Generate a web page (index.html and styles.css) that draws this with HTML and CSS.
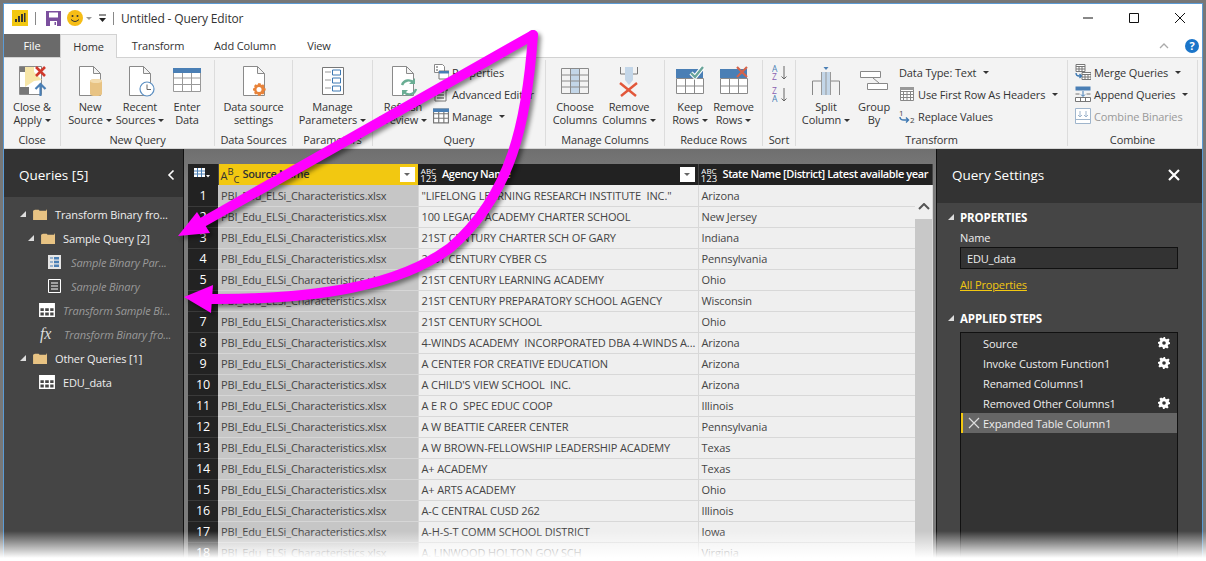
FILE: index.html
```html
<!DOCTYPE html>
<html lang="en">
<head>
    <meta charset="UTF-8" />
    <title>Untitled - Query Editor</title>
    <link rel="stylesheet" href="styles.css">
</head>
<body>
<svg class="sprite" width="0" height="0">
    <symbol id="page" viewBox="0 0 32 34"><path d="M5.500 2.500h14l7 7v22h-21z M19.500 2.500v7h7" fill="#fff" stroke="#8a8a8a"/></symbol>
    <symbol id="folder" viewBox="0 0 16 14"><path d="M0 3l2-1h4l1 1h7l1-2v12H0z" fill="#e8c383"/></symbol>
    <symbol id="grid-w" viewBox="0 0 16 14"><path d="M.75.75h14.500v12.500H.75z M.75 4.500h14.500 M.75 8.750h14.500 M5.500 4.500v8.750 M10.500 4.500v8.750" fill="none" stroke="#fff" stroke-width="1.400"/><path d="M1 1h14v3H1z" fill="#fff"/></symbol>
    <symbol id="gear" viewBox="0 0 12 12"><path d="M5 0h2l.4 1.700 1.400.6L10.300 1.400l1.300 1.300-.9 1.500.6 1.400L12 5v2l-1.700.4-.6 1.400.9 1.500-1.300 1.300-1.500-.9-1.400.6L7 12H5l-.4-1.700-1.400-.6-1.500.9L.4 9.300l.9-1.500-.6-1.400L0 7V5l1.700-.4.6-1.400-.9-1.500L3 .4l1.500.9 1.400-.6z" fill="#fff"/><circle cx="6" cy="6" r="1.800" fill="#333"/></symbol>
    <symbol id="mini-grid" viewBox="0 0 14 14"><path d="M.5 1h13v12H.5z M.5 5h13 M.5 9h13 M5 2v11 M9.500 2v11" fill="#fff" stroke="#777"/><path d="M0 .5h14v3H0z" fill="#4a7fb5"/></symbol>
</svg>

<div class="window">
    <div class="titlebar">
        <svg class="pbi" width="16" height="16" viewBox="0 0 16 16"><rect width="16" height="16" fill="#f2c811"/><path d="M3 12V9h2v3z M6 12V6h2v6z M9 12V4h2v8z M12 12V3h1.500v9z" fill="#333"/></svg>
        <span class="tsep"></span>
        <svg class="save" width="15" height="15" viewBox="0 0 15 15"><path d="M0 0h15v15H0z" fill="#7b4f9e"/><path d="M3 1.500h9v5H3z" fill="#fff"/><path d="M4 10h7v5H4z" fill="#fff"/><path d="M8.500 11h1.500v3H8.500z" fill="#7b4f9e"/></svg>
        <svg class="smile" width="16" height="16" viewBox="0 0 16 16"><circle cx="8" cy="8" r="8" fill="#f6bd16"/><circle cx="5.500" cy="6" r="1" fill="#333"/><circle cx="10.500" cy="6" r="1" fill="#333"/><path d="M4 9.500q4 4 8 0" fill="none" stroke="#333"/></svg>
        <span class="caret grey"></span>
        <svg class="qat" width="9" height="9" viewBox="0 0 9 9"><path d="M1 1h7" stroke="#222"/><path d="M1 4h7L4.500 8z" fill="#222"/></svg>
        <span class="tsep last"></span>
        <span class="title">Untitled - Query Editor</span>
        <div class="winctl">
            <svg width="12" height="12" viewBox="0 0 12 12"><path d="M1 6h10" stroke="#111"/></svg>
            <svg width="12" height="12" viewBox="0 0 12 12"><path d="M1.500 1.500h9v9h-9z" fill="none" stroke="#111"/></svg>
            <svg width="12" height="12" viewBox="0 0 12 12"><path d="M1 1l10 10M11 1L1 11" stroke="#111"/></svg>
        </div>
    </div>

    <div class="tabs">
        <span class="tab file">File</span>
        <span class="tab active">Home</span>
        <span class="tab t-transform">Transform</span>
        <span class="tab t-add">Add Column</span>
        <span class="tab t-view">View</span>
        <svg class="collapse" width="10" height="6" viewBox="0 0 10 6"><path d="M1 5l4-4 4 4" fill="none" stroke="#aaa" stroke-width="1.300"/></svg>
        <span class="help">?</span>
    </div>

    <div class="ribbon">
        <div class="group g-close">
            <div class="items">
                <div class="big">
                    <svg class="ico" width="32" height="34" viewBox="0 0 32 34"><path d="M3.500 2.500h22v28h-22z" fill="#fff" stroke="#8a8a8a"/><path d="M4 3h5v5H4z M4 23h9v7H4z" fill="#777"/><path d="M9 3h9v14l-9 6z" fill="#f7e6a8"/><path d="M18 8l8 8-8 1z" fill="#f7e6a8"/><path d="M20 3l9 9M29 3l-9 9" stroke="#d0392b" stroke-width="2.600"/><path d="M24.500 32V21M19.500 25l5-5 5 5" fill="none" stroke="#4a7fb5" stroke-width="2.200"/></svg>
                    <span>Close &amp;</span><span>Apply<i class="caret"></i></span>
                </div>
            </div>
            <div class="label">Close</div>
        </div>

        <div class="group g-new">
            <div class="items">
                <div class="big w-new">
                    <svg class="ico" width="32" height="34"><use href="#page"/><path d="M15 16a6 2 0 0 1 12 0v13a6 2 0 0 1-12 0z" fill="#e8c383" transform="translate(1 1)"/><ellipse cx="22" cy="17" rx="6" ry="2" fill="#f3dcae"/></svg>
                    <span>New</span><span>Source<i class="caret"></i></span>
                </div>
                <div class="big w-recent">
                    <svg class="ico" width="32" height="34"><use href="#page"/><circle cx="23" cy="25" r="7" fill="#fff" stroke="#5b8fc2" stroke-width="1.200"/><path d="M23 20.500V25.500h4" fill="none" stroke="#666"/></svg>
                    <span>Recent</span><span>Sources<i class="caret"></i></span>
                </div>
                <div class="big w-enter">
                    <svg class="ico" width="30" height="34" viewBox="0 0 30 34"><path d="M1.500 4.500h27v23h-27z M1.500 14h27 M1.500 20.500h27 M10.500 9v18.500 M19.500 9v18.500" fill="#fff" stroke="#999"/><path d="M1 4h28v5H1z" fill="#4a7fb5"/></svg>
                    <span>Enter</span><span>Data</span>
                </div>
            </div>
            <div class="label">New Query</div>
        </div>

        <div class="group g-src">
            <div class="items">
                <div class="big">
                    <svg class="ico" width="32" height="34"><use href="#page"/><path d="M19.500 15h4l.5 2 1.500.7 2-1 2.500 2.500-1 2 .7 1.500 2 .5v3.500l-2 .5-.7 1.500 1 2-2.500 2.500-2-1-1.500.7-.5 2h-4l-.5-2-1.500-.7-2 1-2.500-2.500 1-2-.7-1.500-2-.5v-3.500l2-.5.7-1.500-1-2 2.500-2.500 2 1 1.500-.7z" transform="translate(8 10) scale(.62)" fill="#e8833a"/><circle cx="21" cy="25.500" r="2.500" fill="#fff"/></svg>
                    <span>Data source</span><span>settings</span>
                </div>
            </div>
            <div class="label">Data Sources</div>
        </div>

        <div class="group g-param">
            <div class="items">
                <div class="big">
                    <svg class="ico" width="24" height="34" viewBox="0 0 24 34"><path d="M1.500 3.500h21v27h-21z" fill="#fff" stroke="#777"/><path d="M4 8h6M4 16h6M4 24h6" stroke="#999"/><path d="M11.500 6h8v5h-8z M11.500 14h8v5h-8z M11.500 22h8v5h-8z" fill="#fff" stroke="#3d78b2"/></svg>
                    <span>Manage</span><span>Parameters<i class="caret"></i></span>
                </div>
            </div>
            <div class="label">Parameters</div>
        </div>

        <div class="group g-query">
            <div class="items">
                <div class="big w-refresh">
                    <svg class="ico" width="32" height="34"><use href="#page"/><path d="M15 21a7 7 0 0 1 12-2M29 25a7 7 0 0 1-12 3" fill="none" stroke="#6aae94" stroke-width="2.400"/><path d="M28 14v6h-6z M15 32v-6h6z" fill="#6aae94"/></svg>
                    <span>Refresh</span><span>Preview<i class="caret"></i></span>
                </div>
                <div class="smalls">
                    <div class="small"><svg width="16" height="16" viewBox="0 0 16 16"><path d="M1.500 .5h8l2 2v6h-10z" fill="#fff" stroke="#888"/><path d="M3 3h2M3 6h2" stroke="#555"/><path d="M6 7h10v8H6z" fill="#fff" stroke="#777"/><path d="M6 7h10v2.500H6z" fill="#4a7fb5"/></svg>Properties</div>
                    <div class="small"><svg width="16" height="16" viewBox="0 0 16 16"><path d="M2 3h11v12H2z" fill="#fff" stroke="#777"/><path d="M4 6h7M4 9h7M4 12h7" stroke="#444"/><path d="M12 1l3 3-1 1-3-3z" fill="#333"/></svg>Advanced Editor</div>
                    <div class="small"><svg width="16" height="16"><use href="#mini-grid"/></svg>Manage<i class="caret wide"></i></div>
                </div>
            </div>
            <div class="label">Query</div>
        </div>

        <div class="group g-cols">
            <div class="items">
                <div class="big w-choose">
                    <svg class="ico" width="30" height="34" viewBox="0 0 30 34"><path d="M11 4h8v26h-8z" fill="#c3d6e8"/><path d="M1.500 4.500h27v25h-27z M1.500 11h27 M1.500 17h27 M1.500 23h27 M10.500 4.500v25 M19.500 4.500v25" fill="none" stroke="#8a8a8a"/></svg>
                    <span>Choose</span><span>Columns</span>
                </div>
                <div class="big w-remove">
                    <svg class="ico" width="26" height="34" viewBox="0 0 26 34"><path d="M4.500 3v7h17V3" fill="none" stroke="#777"/><path d="M9 3h8v13l-4 5-4-5z" fill="#c3d6e8"/><path d="M4 19l16 13M21 19L5 32" stroke="#e2573a" stroke-width="2.400"/></svg>
                    <span>Remove</span><span>Columns<i class="caret"></i></span>
                </div>
            </div>
            <div class="label">Manage Columns</div>
        </div>

        <div class="group g-rows">
            <div class="items">
                <div class="big w-keep">
                    <svg class="ico" width="30" height="34" viewBox="0 0 30 34"><path d="M1 5h27v9H1z" fill="#4a7fb5"/><path d="M1.500 14.500h27v15h-27z M1.500 22h27 M10.500 14.500v15 M19.500 14.500v15" fill="#fff" stroke="#8a8a8a"/><path d="M16 9l4 4 8-10" fill="none" stroke="#fff" stroke-width="4.500"/><path d="M16 9l4 4 8-10" fill="none" stroke="#6aa59a" stroke-width="2.400"/></svg>
                    <span>Keep</span><span>Rows<i class="caret"></i></span>
                </div>
                <div class="big w-drop">
                    <svg class="ico" width="30" height="34" viewBox="0 0 30 34"><path d="M1 5h27v9H1z" fill="#4a7fb5"/><path d="M1.500 14.500h27v15h-27z M1.500 22h27 M10.500 14.500v15 M19.500 14.500v15" fill="#fff" stroke="#8a8a8a"/><path d="M18 3l10 10M28 3L18 13" stroke="#d5634a" stroke-width="2.200"/></svg>
                    <span>Remove</span><span>Rows<i class="caret"></i></span>
                </div>
            </div>
            <div class="label">Reduce Rows</div>
        </div>

        <div class="group g-sort">
            <div class="items sort-icons">
                <svg width="16" height="16" viewBox="0 0 16 16"><text x="0" y="7" class="az a">A</text><text x="0" y="15" class="az z">Z</text><path d="M12 1v13M9.500 11.500l2.500 2.500 2.500-2.500" fill="none" stroke="#666"/></svg>
                <svg width="16" height="16" viewBox="0 0 16 16"><text x="0" y="7" class="az z">Z</text><text x="0" y="15" class="az a">A</text><path d="M12 1v13M9.500 11.500l2.500 2.500 2.500-2.500" fill="none" stroke="#666"/></svg>
            </div>
            <div class="label">Sort</div>
        </div>

        <div class="group g-transform">
            <div class="items">
                <div class="big w-split">
                    <svg class="ico" width="30" height="34" viewBox="0 0 30 34"><path d="M1.500 31V17h9M28.500 31V17h-9" fill="none" stroke="#888"/><path d="M11 8h8v23h-8z" fill="#c3d6e8"/><path d="M10.500 31V8M19.500 31V8M15 8v23" stroke="#999" fill="none"/><path d="M12.500 3h5L15 6z" fill="#4a7fb5"/></svg>
                    <span>Split</span><span>Column<i class="caret"></i></span>
                </div>
                <div class="big w-group">
                    <svg class="ico" width="30" height="34" viewBox="0 0 30 34"><path d="M1.500 7.500h20v6h-20z M8.500 19.500h20v6h-20z M14 14l6 5" fill="#fff" stroke="#888"/></svg>
                    <span>Group</span><span>By</span>
                </div>
                <div class="smalls">
                    <div class="small plain">Data Type: Text<i class="caret wide"></i></div>
                    <div class="small"><svg width="16" height="16" viewBox="0 0 16 16"><path d="M1.500 1.500h13v13h-13z M1.500 5.500h13 M1.500 8.500h13 M1.500 11.500h13 M4.500 5v9 M8 5v9 M11.500 5v9" fill="#fff" stroke="#888"/><path d="M1 1h14v3H1z" fill="#999"/></svg>Use First Row As Headers<i class="caret wide"></i></div>
                    <div class="small"><svg width="16" height="16" viewBox="0 0 16 16"><text x="0" y="8" class="nums">1</text><text x="11" y="15" class="nums">2</text><path d="M1 9q0 3 4 3h4M7 9.500l2.500 2.500L7 14.500" fill="none" stroke="#3d78b2" stroke-width="1.400"/></svg>Replace Values</div>
                </div>
            </div>
            <div class="label">Transform</div>
        </div>

        <div class="group g-combine">
            <div class="items">
                <div class="smalls">
                    <div class="small"><svg width="16" height="16" viewBox="0 0 16 16"><path d="M1 .5h9v7H1z M1 2.500h9 M1 5h9 M4 2.500v5 M7 2.500v5" fill="#fff" stroke="#777"/><path d="M7 8.500h9v7H7z M7 10.500h9 M7 13h9 M10 10.500v5 M13 10.500v5" fill="#fff" stroke="#777"/><path d="M1 9q0 3 3 3h2M4.500 10l2 2-2 2" fill="none" stroke="#3d78b2" stroke-width="1.300"/></svg>Merge Queries<i class="caret wide"></i></div>
                    <div class="small"><svg width="16" height="16" viewBox="0 0 16 16"><path d="M.5 .5h15v4H.5z" fill="#4a7fb5"/><path d="M.5 11.500h15v4H.5z M5.500 11.500v4 M10.500 11.500v4" fill="#fff" stroke="#777"/><path d="M8 5v5M6 8.500l2 2 2-2" fill="none" stroke="#3d78b2"/><path d="M.5 8h4M11.500 8h4" stroke="#777"/></svg>Append Queries<i class="caret wide"></i></div>
                    <div class="small off"><svg width="16" height="16" viewBox="0 0 16 16"><path d="M.5 .5h15v15H.5z M.5 11.500h15" fill="#fff" stroke="#9fb5cc"/><path d="M5 3v6M3 7l2 2 2-2M11 3v6M9 7l2 2 2-2" fill="none" stroke="#9fb5cc"/></svg>Combine Binaries</div>
                </div>
            </div>
            <div class="label">Combine</div>
        </div>
    </div>

    <div class="main">
        <aside class="queries">
            <div class="pane-head q-head">Queries [5]
                <svg width="8" height="12" viewBox="0 0 8 12"><path d="M6.500 1.500L2 6l4.500 4.500" fill="none" stroke="#fff" stroke-width="1.600"/></svg>
            </div>
            <ul class="tree">
                <li class="lv1"><i class="tri"></i><svg width="15" height="13"><use href="#folder"/></svg><span>Transform Binary fro...</span></li>
                <li class="lv2"><i class="tri"></i><svg width="15" height="13"><use href="#folder"/></svg><span>Sample Query [2]</span></li>
                <li class="lv3 dim"><svg width="13" height="14" viewBox="0 0 13 14"><path d="M0 0h13v14H0z" fill="#e6e6e6"/><path d="M6 2h5v2.500H6z M6 5.800h5v2.500H6z M6 9.600h5v2.500H6z" fill="#4a7fb5"/><path d="M2 3h3M2 7h3M2 11h3" stroke="#4a7fb5"/></svg><span>Sample Binary Par...</span></li>
                <li class="lv3 dim"><svg width="13" height="14" viewBox="0 0 13 14"><path d="M.5 .5h12v13H.5z M3 4h7M3 7h7M3 10h7" fill="none" stroke="#fff"/></svg><span>Sample Binary</span></li>
                <li class="lv2b dim"><svg width="16" height="14"><use href="#grid-w"/></svg><span>Transform Sample Bi...</span></li>
                <li class="lv2b dim"><span class="fx">fx</span><span>Transform Binary fro...</span></li>
                <li class="lv1"><i class="tri"></i><svg width="15" height="13"><use href="#folder"/></svg><span>Other Queries [1]</span></li>
                <li class="lv2b"><svg width="16" height="14"><use href="#grid-w"/></svg><span>EDU_data</span></li>
            </ul>
        </aside>

        <section class="center">
            <div class="gridwrap">
                <table class="grid">
                    <thead>
                        <tr>
                            <th class="corner"><svg width="16" height="11" viewBox="0 0 16 11"><path d="M0 0h11v9H0z" fill="#fff"/><path d="M0 3h11M0 6h11M3.500 0v9M7.500 0v9" stroke="#4a7fb5"/><path d="M12 7h4l-2 2.500z" fill="#fff"/></svg></th>
                            <th class="h-src"><span class="type abc">A<sup>B</sup><sub>C</sub></span>Source Name<span class="filter"></span></th>
                            <th><span class="type two">ABC<br><b>123</b></span>Agency Name<span class="filter"></span></th>
                            <th class="h-last"><span class="type two">ABC<br><b>123</b></span>State Name [District] Latest available year</th>
                        </tr>
                    </thead>
                    <tbody>
                        <tr><td class="n">1</td><td class="sel">PBI_Edu_ELSi_Characteristics.xlsx</td><td>"LIFELONG LEARNING RESEARCH INSTITUTE&nbsp; INC."</td><td>Arizona</td></tr>
                        <tr><td class="n">2</td><td class="sel">PBI_Edu_ELSi_Characteristics.xlsx</td><td>100 LEGACY ACADEMY CHARTER SCHOOL</td><td>New Jersey</td></tr>
                        <tr><td class="n">3</td><td class="sel">PBI_Edu_ELSi_Characteristics.xlsx</td><td>21ST CENTURY CHARTER SCH OF GARY</td><td>Indiana</td></tr>
                        <tr><td class="n">4</td><td class="sel">PBI_Edu_ELSi_Characteristics.xlsx</td><td>21ST CENTURY CYBER CS</td><td>Pennsylvania</td></tr>
                        <tr><td class="n">5</td><td class="sel">PBI_Edu_ELSi_Characteristics.xlsx</td><td>21ST CENTURY LEARNING ACADEMY</td><td>Ohio</td></tr>
                        <tr><td class="n">6</td><td class="sel">PBI_Edu_ELSi_Characteristics.xlsx</td><td>21ST CENTURY PREPARATORY SCHOOL AGENCY</td><td>Wisconsin</td></tr>
                        <tr><td class="n">7</td><td class="sel">PBI_Edu_ELSi_Characteristics.xlsx</td><td>21ST CENTURY SCHOOL</td><td>Ohio</td></tr>
                        <tr><td class="n">8</td><td class="sel">PBI_Edu_ELSi_Characteristics.xlsx</td><td>4-WINDS ACADEMY&nbsp; INCORPORATED DBA 4-WINDS A...</td><td>Arizona</td></tr>
                        <tr><td class="n">9</td><td class="sel">PBI_Edu_ELSi_Characteristics.xlsx</td><td>A CENTER FOR CREATIVE EDUCATION</td><td>Arizona</td></tr>
                        <tr><td class="n">10</td><td class="sel">PBI_Edu_ELSi_Characteristics.xlsx</td><td>A CHILD'S VIEW SCHOOL&nbsp; INC.</td><td>Arizona</td></tr>
                        <tr><td class="n">11</td><td class="sel">PBI_Edu_ELSi_Characteristics.xlsx</td><td>A E R O&nbsp; SPEC EDUC COOP</td><td>Illinois</td></tr>
                        <tr><td class="n">12</td><td class="sel">PBI_Edu_ELSi_Characteristics.xlsx</td><td>A W BEATTIE CAREER CENTER</td><td>Pennsylvania</td></tr>
                        <tr><td class="n">13</td><td class="sel">PBI_Edu_ELSi_Characteristics.xlsx</td><td>A W BROWN-FELLOWSHIP LEADERSHIP ACADEMY</td><td>Texas</td></tr>
                        <tr><td class="n">14</td><td class="sel">PBI_Edu_ELSi_Characteristics.xlsx</td><td>A+ ACADEMY</td><td>Texas</td></tr>
                        <tr><td class="n">15</td><td class="sel">PBI_Edu_ELSi_Characteristics.xlsx</td><td>A+ ARTS ACADEMY</td><td>Ohio</td></tr>
                        <tr><td class="n">16</td><td class="sel">PBI_Edu_ELSi_Characteristics.xlsx</td><td>A-C CENTRAL CUSD 262</td><td>Illinois</td></tr>
                        <tr><td class="n">17</td><td class="sel">PBI_Edu_ELSi_Characteristics.xlsx</td><td>A-H-S-T COMM SCHOOL DISTRICT</td><td>Iowa</td></tr>
                        <tr><td class="n">18</td><td class="sel">PBI_Edu_ELSi_Characteristics.xlsx</td><td>A. LINWOOD HOLTON GOV SCH</td><td>Virginia</td></tr>
                    </tbody>
                </table>
                <div class="scroll">
                    <div class="scroll-up"><svg width="12" height="7" viewBox="0 0 12 7"><path d="M1 6l5-5 5 5" fill="none" stroke="#555" stroke-width="2"/></svg></div>
                    <div class="thumb"></div>
                </div>
            </div>
        </section>

        <aside class="settings">
            <div class="pane-head s-head">Query Settings
                <svg width="12" height="12" viewBox="0 0 12 12"><path d="M1 1l10 10M11 1L1 11" stroke="#fff" stroke-width="2.200"/></svg>
            </div>
            <div class="s-body">
                <h3><i class="tri"></i>PROPERTIES</h3>
                <div class="s-inner">
                    <div class="s-name">Name</div>
                    <div class="s-input">EDU_data</div>
                    <a class="s-link">All Properties</a>
                </div>
                <h3 class="second"><i class="tri"></i>APPLIED STEPS</h3>
                <div class="steps">
                    <div class="step">Source<svg width="12" height="12"><use href="#gear"/></svg></div>
                    <div class="step">Invoke Custom Function1<svg width="12" height="12"><use href="#gear"/></svg></div>
                    <div class="step">Renamed Columns1</div>
                    <div class="step">Removed Other Columns1<svg width="12" height="12"><use href="#gear"/></svg></div>
                    <div class="step current"><svg class="del" width="12" height="12" viewBox="0 0 12 12"><path d="M1 1l10 10M11 1L1 11" stroke="#ddd" stroke-width="1.200"/></svg>Expanded Table Column1</div>
                </div>
            </div>
        </aside>
    </div>
</div>

<!-- annotation drawn over the screenshot -->
<svg class="arrows" width="1206" height="561" viewBox="0 0 1206 561">
    <path d="M533 35L196 226" fill="none" stroke="#ff00ff" stroke-width="10" stroke-linecap="round"/>
    <path d="M178 236L197 212L210 233z" fill="#ff00ff"/>
    <path d="M533 35C527 120 512 195 450 248C400 285 320 300 205 299" fill="none" stroke="#ff00ff" stroke-width="10" stroke-linecap="round"/>
    <path d="M184 297L213 285L211 313z" fill="#ff00ff"/>
</svg>
<div class="fade"></div>
</body>
</html>
```
FILE: styles.css
```css
* {
    box-sizing: border-box;
}

html, body {
    margin: 0;
    height: 561px;
    overflow: hidden;
}

body {
    position: relative;
    background: #777;
    padding: 3px 3px 0;
    font-family: "Open Sans", "Noto Sans", sans-serif;
    font-size: 11px;
    letter-spacing: -0.12px;
    color: #333;
}

.sprite {
    position: absolute;
}

.window {
    height: 558px;
    border: 1px solid #5b9bd5;
    border-bottom: 0;
    display: flex;
    flex-direction: column;
    background: #fff;
}

/* title bar */
.titlebar {
    height: 30px;
    display: flex;
    align-items: center;
    padding: 0 0 2px 8px;
    flex: none;
}
.pbi { margin-right: 7px; }
.tsep { width: 1px; height: 13px; background: #888; margin-right: 10px; }
.tsep.last { margin: 0 7px 0 6px; }
.save { margin-right: 6px; }
.qat { margin-left: 6px; }
.title { font-size: 12px; color: #333; letter-spacing: -0.15px; }
.winctl { margin-left: auto; display: flex; gap: 34px; padding-right: 16px; }

.caret {
    display: inline-block;
    width: 0;
    height: 0;
    border: 3px solid transparent;
    border-top: 3.500px solid #333;
    border-bottom: 0;
    margin-left: 3px;
    vertical-align: 2px;
}
.caret.grey { border-top-color: #999; }
.caret.wide { margin-left: 4px; }

/* tabs */
.tabs {
    height: 23px;
    display: flex;
    flex: none;
    align-items: center;
    position: relative;
}
.tab { text-align: center; line-height: 23px; }
.tab.file { width: 56px; background: #6a6a6a; color: #fff; height: 23px; }
.tab.active { width: 57px; height: 24px; background: #f3f3f3; border: 1px solid #d2d2d2; border-bottom: 0; margin-top: 1px; z-index: 1; }
.t-transform { width: 82px; }
.t-add { width: 92px; }
.t-view { width: 56px; }
.collapse { margin-left: auto; margin-right: 16px; }
.help {
    width: 14px;
    height: 14px;
    border-radius: 50%;
    background: #1b75c9;
    color: #fff;
    font-size: 11px;
    font-weight: 700;
    line-height: 14px;
    text-align: center;
    margin-right: 3px;
}

/* ribbon */
.ribbon {
    height: 92px;
    flex: none;
    background: #f3f3f3;
    border-top: 1px solid #d2d2d2;
    border-bottom: 1px solid #d6d6d6;
    display: flex;
    padding-top: 2px;
}
.group {
    display: flex;
    flex-direction: column;
    height: 86px;
    border-right: 1px solid #dcdcdc;
    flex: none;
}
.items { display: flex; height: 70px; flex: none; }
.label { height: 16px; text-align: center; line-height: 20px; }

.g-close { width: 57px; }
.g-new { width: 154px; }
.g-src { width: 78px; }
.g-param { width: 80px; }
.g-query { width: 173px; }
.g-cols { width: 119px; }
.g-rows { width: 98px; }
.g-sort { width: 33px; }
.g-transform { width: 272px; }
.g-combine { width: 130px; }

.big {
    display: flex;
    flex-direction: column;
    align-items: center;
    line-height: 13px;
    white-space: nowrap;
    flex: 1;
    padding-top: 4px;
}
.big .ico { margin-bottom: 2px; flex: none; }

.g-new .items { padding-left: 1px; }
.w-new { flex: none; width: 56px; }
.w-recent { flex: none; width: 44px; }
.w-enter { flex: none; width: 50px; }
.w-refresh { flex: none; width: 60px; }
.w-choose { flex: none; width: 58px; }
.w-remove { flex: none; width: 50px; }
.w-keep { flex: none; width: 50px; }
.w-drop { flex: none; width: 37px; }
.w-split { flex: none; width: 60px; }
.w-group { flex: none; width: 36px; }

.smalls { display: flex; flex-direction: column; padding-top: 1px; }
.small {
    height: 22px;
    display: flex;
    align-items: center;
    gap: 3px;
    white-space: nowrap;
}
.small .caret { flex: none; }
.small.off { color: #999; }
.g-transform .smalls { margin-left: 7px; }
.g-combine .smalls { margin-left: 7px; }

.sort-icons { flex-direction: column; gap: 6px; padding: 5px 0 0 9px; }
.az { font-size: 8.500px; }
.az.a { fill: #4a7fb5; }
.az.z { fill: #8a5fb0; }
.nums { font-size: 8px; fill: #444; }

/* main area */
.main {
    flex: 1;
    display: flex;
    min-height: 0;
}
.pane-head {
    color: #fff;
    background: #333;
    display: flex;
    align-items: center;
    justify-content: space-between;
    font-size: 13.500px;
    letter-spacing: 0;
}

/* queries pane */
.queries {
    width: 180px;
    flex: none;
    background: #454545;
    border-right: 1px solid #111;
    color: #eee;
}
.q-head { height: 48px; padding: 3px 8px 0 15px; }
.tree { list-style: none; margin: 5px 0 0; padding: 0; }
.tree li {
    height: 24px;
    display: flex;
    align-items: center;
    gap: 7px;
    white-space: nowrap;
}
.lv1 { padding-left: 16px; }
.lv2 { padding-left: 24px; }
.lv3 { padding-left: 44px; }
.lv2b { padding-left: 35px; }
.dim { color: #9a9a9a; font-style: italic; }
.lv3 span { margin-left: 3px; }
.lv2b span { margin-left: 1px; }
.fx { font-family: "Liberation Serif", serif; font-size: 16px; color: #ddd; width: 16px; font-style: italic; }
.tri {
    display: inline-block;
    width: 0;
    height: 0;
    border-style: solid;
    border-width: 0 0 6px 6px;
    border-color: transparent transparent #ddd transparent;
}

/* data grid */
.center {
    flex: 1;
    min-width: 0;
    background: linear-gradient(#6f6f6f, #7c7c7c 30px, #7c7c7c);
    padding: 15px 4px 0 4px;
    overflow: hidden;
}
.gridwrap { display: flex; height: 100%; position: relative; }
.grid {
    border-collapse: collapse;
    table-layout: fixed;
    width: 744px;
    align-self: flex-start;
}
.grid th {
    height: 21px;
    background: #222;
    color: #fff;
    font-weight: 600;
    letter-spacing: -0.4px;
    text-align: left;
    padding: 0 2px;
    white-space: nowrap;
    overflow: hidden;
    border-right: 1px solid #444;
    position: relative;
}
.grid th.corner { width: 30px; padding-left: 6px; }
.grid th.h-src { width: 200px; background: #f2c811; color: #333; border-right: 0; }
.grid th:nth-child(3) { width: 280px; }
.grid th.h-last { width: 234px; }
.type { display: inline-block; font-size: 8px; line-height: 8px; vertical-align: middle; margin-right: 5px; font-weight: 400; width: 17px; text-align: center; letter-spacing: 0; }
.type b { font-size: 9.500px; font-weight: 400; }
.type.abc { color: #333; font-size: 11px; line-height: 14px; width: 18px; margin-right: 4px; }
.type.abc sup, .type.abc sub { font-size: 9.500px; line-height: 0; }
.filter {
    position: absolute;
    right: 3px;
    top: 3px;
    width: 15px;
    height: 15px;
    background: #fff;
}
.filter::after {
    content: "";
    position: absolute;
    left: 4px;
    top: 6px;
    border: 3.500px solid transparent;
    border-top-color: #666;
    border-bottom: 0;
}
.grid td {
    height: 21px;
    padding: 0 3px;
    background: #efefef;
    border-bottom: 1px solid #d8d8d8;
    border-right: 1px solid #d8d8d8;
    white-space: nowrap;
    overflow: hidden;
    color: #444;
}
.grid td.n {
    background: #222;
    color: #fff;
    text-align: center;
    font-size: 12.500px;
    border-bottom: 1px solid #3a3a3a;
    border-right: 0;
}
.grid td.sel { background: #c6c6c6; border-color: #d6d6d6; }
.scroll {
    position: absolute;
    top: 21px;
    right: 0;
    bottom: 0;
    width: 17px;
    background: #efefef;
    display: flex;
    flex-direction: column;
}
.scroll-up { height: 34px; display: flex; justify-content: center; padding-top: 18px; }
.thumb { flex: 1; background: #c8c8c8; }

/* settings pane */
.settings {
    width: 266px;
    flex: none;
    background: #454545;
    color: #eee;
    border-left: 1px solid #111;
    display: flex;
    flex-direction: column;
}
.s-head { height: 54px; padding: 0 22px 3px 15px; flex: none; }
.s-body {
    padding: 6px 24px 0 11px;
    flex: 1;
    min-height: 0;
    display: flex;
    flex-direction: column;
}
.s-body h3 {
    margin: 0;
    font-size: 11.500px;
    font-weight: 700;
    color: #fff;
    display: flex;
    align-items: center;
    gap: 6px;
    height: 16px;
    flex: none;
}
.s-body h3.second { margin-top: 17px; }
.s-inner { padding-left: 12px; }
.s-name { margin-top: 5px; line-height: 16px; }
.s-input {
    height: 22px;
    margin-top: 1px;
    background: #333;
    border: 1px solid #111;
    padding-left: 6px;
    line-height: 21px;
}
.s-link {
    display: inline-block;
    color: #f2c811;
    text-decoration: underline;
    margin-top: 8px;
    line-height: 16px;
}
.steps {
    margin: 6px 0 0 12px;
    flex: 1;
    background: #333;
    border: 1px solid #111;
    border-bottom: 0;
}
.step {
    height: 20px;
    display: flex;
    align-items: center;
    justify-content: space-between;
    padding: 0 7px 0 22px;
}
.step.current {
    background: #666;
    justify-content: flex-start;
    border-left: 2px solid #f2c811;
    padding-left: 5px;
    gap: 3px;
}

/* pink arrows and the fade at the bottom edge */
.arrows {
    position: absolute;
    left: 0;
    top: 0;
    filter: drop-shadow(3px 3px 2px rgba(0, 0, 0, .45));
    pointer-events: none;
}
.fade {
    position: absolute;
    left: 0;
    right: 0;
    bottom: 0;
    height: 30px;
    background: linear-gradient(rgba(255, 255, 255, 0), #fff 90%);
}
```
